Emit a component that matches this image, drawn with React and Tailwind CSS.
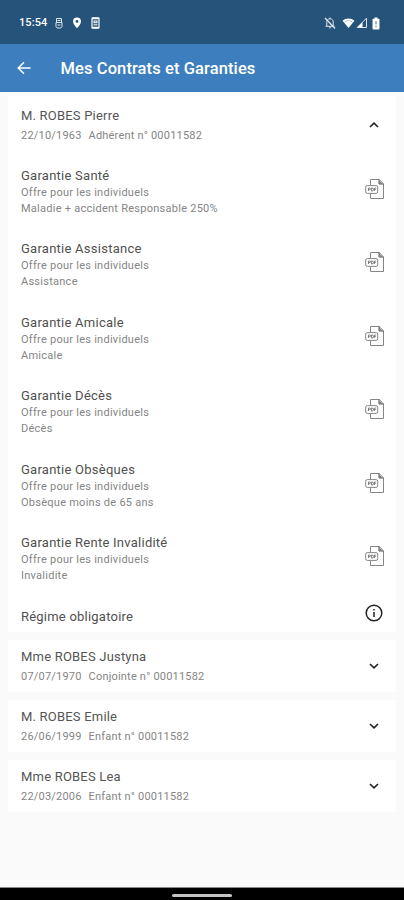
const guarantees = [
  ["Garantie Santé", "Maladie + accident Responsable 250%"],
  ["Garantie Assistance", "Assistance"],
  ["Garantie Amicale", "Amicale"],
  ["Garantie Décès", "Décès"],
  ["Garantie Obsèques", "Obsèque moins de 65 ans"],
  ["Garantie Rente Invalidité", "Invalidite"],
];

const members = [
  ["Mme ROBES Justyna", "07/07/1970", "Conjointe n° 00011582"],
  ["M. ROBES Emile", "26/06/1999", "Enfant n° 00011582"],
  ["Mme ROBES Lea", "22/03/2006", "Enfant n° 00011582"],
];

function Chevron({ up }) {
  return (
    <svg width="10" height="6" viewBox="0 0 10 6" className={up ? "-mt-px" : "-mt-px rotate-180"} fill="none" stroke="#222" strokeWidth="1.6">
      <path d="M1 5 5 1.200 9 5" />
    </svg>
  );
}

function PdfIcon() {
  return (
    <svg width="20" height="22" viewBox="0 0 20 22" fill="none" stroke="#858585" strokeWidth="1">
      <path d="M5.500 7V1.500h8.700l4.300 4.300v14.700h-13V16" />
      <path d="M14 1.500v4.500h4.500" stroke="#555" />
      <path d="M14.200 2.500v3.300h3.300z" fill="#777" stroke="none" />
      <rect x=".7" y="7.600" width="12" height="7.800" rx="1.600" />
      <path d="M3.500 13V10h1.200a.8.800 0 0 1 0 1.600H3.500M6.400 10v3h.6a1.500 1.500 0 0 0 0-3zM9.400 13v-3h1.800M9.400 11.500h1.400" stroke="#666" strokeWidth=".8" />
    </svg>
  );
}

function StatusBar() {
  return (
    <div className="flex h-11 items-center justify-between bg-[#265379] pt-0.5 pl-[19px] pr-[24px] text-white">
      <div className="flex items-center">
        <span className="w-[28px] whitespace-nowrap pt-px text-[11px] font-medium tracking-[0.1px]">15:54</span>
        <svg className="ml-[8px]" width="8" height="12" viewBox="0 0 8 12" fill="none" stroke="#dce6ee">
          <path d="M1.500 5V1.500h5V5M1 5.500h6v4L5.800 11H2.200L1 9.500zM2.500 3.500h3M2.500 8h3" />
        </svg>
        <svg className="ml-[9px]" width="10" height="12" viewBox="0 0 10 12">
          <path fill="#fff" fillRule="evenodd" d="M5 .6a4 4 0 0 0-4 4C1 7.300 5 11.400 5 11.400s4-4.100 4-6.800a4 4 0 0 0-4-4M5 3a1.400 1.400 0 1 1 0 2.800A1.400 1.400 0 0 1 5 3" />
        </svg>
        <svg className="ml-[9px]" width="9" height="12" viewBox="0 0 9 12" fill="none" stroke="#fff">
          <rect x="1" y=".8" width="7" height="10.400" rx=".8" strokeWidth="1.200" />
          <path d="M1 1.500h7M1 10.500h7" strokeWidth="1.500" />
          <rect x="3" y="4" width="3" height="1.700" />
          <path d="M2.500 7.800h4" />
        </svg>
      </div>
      <div className="flex items-center">
        <svg width="12" height="12" viewBox="0 0 12 12" fill="none" stroke="#dce6ee">
          <path d="M2.800 9V5.200C2.800 3 4 1.800 6 1.800S9.200 3 9.200 5.200V9M1.500 9.300h9M5 10.800h2" />
          <path d="M1 1l10 10.500" strokeWidth="1.300" />
          <path d="M6 .5v1.300" />
        </svg>
        <svg className="ml-[6px]" width="13" height="12" viewBox="0 0 13 12">
          <path fill="#fff" d="M.5 3.700A9.200 9.200 0 0 1 12.500 3.700L6.500 11z" />
          <path d="M2.300 5.200a7 7 0 0 1 8.400 0" stroke="#8fa8bd" strokeWidth=".7" fill="none" />
        </svg>
        <svg className="ml-[1px]" width="12" height="12" viewBox="0 0 12 12">
          <path fill="none" stroke="#dce6ee" d="M1.200 10.500 10.500 1.200v9.300z" />
          <path fill="#fff" d="M1.200 10.500 6.500 5.200v5.300z" />
        </svg>
        <svg className="ml-[4px]" width="8" height="13" viewBox="0 0 8 13">
          <path fill="#fff" d="M2.500.5h3v1.300h1.200c.5 0 .8.300.8.800v9c0 .5-.3.900-.8.900H1.300c-.5 0-.8-.4-.8-.9v-9c0-.5.3-.8.800-.8h1.200z" />
          <path d="M4 4.300v3.200M4 8.700V10" stroke="#577895" strokeWidth="1.100" />
        </svg>
      </div>
    </div>
  );
}

function Header({ name, date, role, open }) {
  return (
    <div className="flex items-center justify-between pr-[17px] pl-[13px]">
      <div className="pt-px">
        <div className="text-[13px] leading-5 tracking-[0.200px] text-[#555]">{name}</div>
        <div className="flex gap-[7px] text-[11px] leading-5 tracking-[0.200px] text-[#858585]">
          <span>{date}</span>
          <span>{role}</span>
        </div>
      </div>
      <Chevron up={open} />
    </div>
  );
}

export default function App() {
  return (
    <div className="flex h-[900px] w-[404px] flex-col overflow-hidden bg-[#fafafa] font-[Roboto,sans-serif]">
      <StatusBar />
      <header className="flex h-[47.500px] shrink-0 items-center bg-[#3d7fbe] pt-[2px] pl-[17px] text-white">
        <svg className="-mt-px" width="14" height="14" viewBox="0 0 14 14" fill="none" stroke="#fff" strokeWidth="1.500">
          <path d="M13.500 7H1.500M7 1.200 1.200 7 7 12.800" />
        </svg>
        <h1 className="ml-[29.500px] pt-px text-[16.500px] font-medium tracking-[0.100px] whitespace-nowrap">Mes Contrats et Garanties</h1>
      </header>
      <main className="flex grow flex-col gap-2 px-2 pt-[4.500px]">
        <section className="h-[536px] bg-white pt-[9px]">
          <Header name="M. ROBES Pierre" date="22/10/1963" role="Adhérent n° 00011582" open />
          <div className="pt-[11.500px]">
            {guarantees.map(([title, detail]) => (
              <div key={title} className="flex h-[73.500px] justify-between pt-[9px] pr-[11px] pl-[13px]">
                <div>
                  <div className="text-[13px] leading-[18px] tracking-[0.250px] text-[#505050]">{title}</div>
                  <div className="text-[11px] leading-4 tracking-[0.260px] text-[#858585]">Offre pour les individuels</div>
                  <div className="text-[11px] leading-4 tracking-[0.260px] text-[#858585]">{detail}</div>
                </div>
                <div className="pt-[11px]"><PdfIcon /></div>
              </div>
            ))}
          </div>
          <div className="flex items-center justify-between pt-[4px] pr-[13px] pl-[13px]">
            <span className="pt-[4px] text-[13px] leading-5 tracking-[0.220px] text-[#505050]">Régime obligatoire</span>
            <svg className="-mt-1" width="18" height="18" viewBox="0 0 18 18" fill="none" stroke="#222">
              <circle cx="9" cy="9" r="7.800" strokeWidth="1.500" />
              <path d="M9 8v5M9 5v1.500" strokeWidth="1.500" />
            </svg>
          </div>
        </section>
        {members.map(([name, date, role]) => (
          <section key={name} className="h-[52px] bg-white pt-[6px]">
            <Header name={name} date={date} role={role} />
          </section>
        ))}
      </main>
      <footer className="flex h-[13px] items-center justify-center border-t border-[#888] bg-black">
        <div className="mt-[2px] h-[3px] w-[60px] rounded-sm bg-[#c4c4c4]" />
      </footer>
    </div>
  );
}
